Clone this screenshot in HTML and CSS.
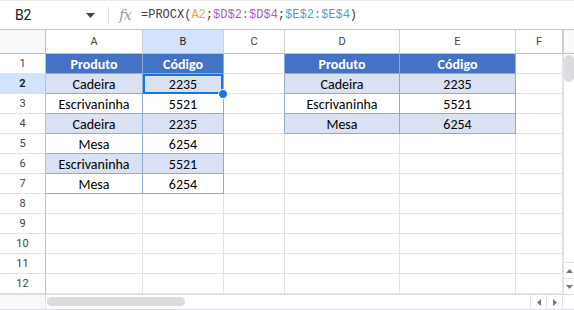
FILE: index.html
```html
<!DOCTYPE html>
<html>
<head>
<meta charset="utf-8">
<link rel="stylesheet" href="styles.css">
</head>
<body>
<div class="toolbar">
  <div class="namebox">B2</div>
  <svg class="dd" width="9" height="5" viewBox="0 0 9 5"><path d="M0 0h9L4.5 5z" fill="#444"/></svg>
  <div class="sep"></div>
  <div class="fx">fx</div>
  <div class="formula">=PROCX(<span class="r1">A2</span>;<span class="r2">$D$2:$D$4</span>;<span class="r3">$E$2:$E$4</span>)</div>
</div>
<div class="sheet">
  <div class="corner"></div>
  <div class="ch">A</div><div class="ch sel">B</div><div class="ch">C</div><div class="ch">D</div><div class="ch">E</div><div class="ch">F</div>
  <div class="chs"></div>

  <div class="vscroll">
    <div class="vtrack"><div class="vthumb"></div></div>
    <div class="vbtn"><svg width="7" height="4" viewBox="0 0 7 4"><path d="M0 4L3.5 0 7 4z" fill="#777"/></svg></div>
    <div class="vbtn"><svg width="7" height="4" viewBox="0 0 7 4"><path d="M0 0h7L3.5 4z" fill="#777"/></svg></div>
  </div>

  <div class="rh">1</div><div class="c th">Produto</div><div class="c th">Código</div><div class="c bl"></div><div class="c th">Produto</div><div class="c th">Código</div><div class="c"></div>
  <div class="rh sel">2</div><div class="c td1">Cadeira</div><div class="c td1 active">2235<span class="selbox"></span><span class="handle"></span></div><div class="c bl"></div><div class="c td1">Cadeira</div><div class="c td1">2235</div><div class="c"></div>
  <div class="rh">3</div><div class="c td0">Escrivaninha</div><div class="c td0">5521</div><div class="c bl"></div><div class="c td0">Escrivaninha</div><div class="c td0">5521</div><div class="c"></div>
  <div class="rh">4</div><div class="c td1">Cadeira</div><div class="c td1">2235</div><div class="c bl"></div><div class="c td1">Mesa</div><div class="c td1">6254</div><div class="c"></div>
  <div class="rh">5</div><div class="c td0">Mesa</div><div class="c td0">6254</div><div class="c"></div><div class="c"></div><div class="c"></div><div class="c"></div>
  <div class="rh">6</div><div class="c td1">Escrivaninha</div><div class="c td1">5521</div><div class="c"></div><div class="c"></div><div class="c"></div><div class="c"></div>
  <div class="rh">7</div><div class="c td0">Mesa</div><div class="c td0">6254</div><div class="c"></div><div class="c"></div><div class="c"></div><div class="c"></div>
  <div class="rh">8</div><div class="c"></div><div class="c"></div><div class="c"></div><div class="c"></div><div class="c"></div><div class="c"></div>
  <div class="rh">9</div><div class="c"></div><div class="c"></div><div class="c"></div><div class="c"></div><div class="c"></div><div class="c"></div>
  <div class="rh">10</div><div class="c"></div><div class="c"></div><div class="c"></div><div class="c"></div><div class="c"></div><div class="c"></div>
  <div class="rh">11</div><div class="c"></div><div class="c"></div><div class="c"></div><div class="c"></div><div class="c"></div><div class="c"></div>
  <div class="rh">12</div><div class="c"></div><div class="c"></div><div class="c"></div><div class="c"></div><div class="c"></div><div class="c"></div>

  <div class="hscroll">
    <div class="hcorner"></div>
    <div class="htrack"><div class="hthumb"></div></div>
    <div class="hbtn"><svg width="4" height="7" viewBox="0 0 4 7"><path d="M4 0v7L0 3.5z" fill="#777"/></svg></div>
    <div class="hbtn"><svg width="4" height="7" viewBox="0 0 4 7"><path d="M0 0v7L4 3.5z" fill="#777"/></svg></div>
    <div class="hend"></div>
  </div>
</div>
</body>
</html>
```
FILE: styles.css
```css
* { box-sizing: border-box; }
html, body { margin: 0; padding: 0; background: #fff; }
body { width: 574px; height: 310px; overflow: hidden; font-family: Roboto, "Liberation Sans", sans-serif; }

.toolbar {
  height: 30px;
  border-top: 1px solid #e8eaed;
  border-bottom: 1px solid #c7c7c7;
  display: flex;
  align-items: center;
  color: #202124;
}
.namebox { width: 86px; padding-left: 15px; font-size: 14px; letter-spacing: -0.3px; }
.dd { margin-top: 1px; }
.sep { width: 1px; height: 16px; background: #dadce0; margin-left: 13px; }
.fx {
  margin-left: 10px; width: 22px;
  font-family: "DejaVu Serif", "Liberation Serif", serif;
  font-style: italic; font-size: 15px; color: #9aa0a6; letter-spacing: -1px;
}
.formula { font-family: "Liberation Mono", "DejaVu Sans Mono", monospace; font-size: 12px; color: #3c4043; }
.r1 { color: #f2a33a; }
.r2 { color: #a05fc8; }
.r3 { color: #33a9cf; }

.sheet {
  display: grid;
  grid-template-columns: 46px 97px 81px 61px 115px 116px 47px 11px;
  grid-template-rows: 24px repeat(12, 20px) 16px;
}
.corner { background: #f8f9fa; border-right: 1px solid #c0c0c0; border-bottom: 1px solid #c0c0c0; }
.ch {
  border-right: 1px solid #d0d0d0; border-bottom: 1px solid #c0c0c0;
  display: flex; align-items: center; justify-content: center;
  font-size: 11px; color: #444;
}
.ch.sel { background: #d3e3fd; color: #1f1f1f; }
.chs { background: #f8f9fa; border-bottom: 1px solid #c0c0c0; border-left: 1px solid #d0d0d0; }

.vscroll {
  grid-column: 8; grid-row: 2 / 14;
  display: flex; flex-direction: column;
  border-left: 1px solid #e2e2e2;
}
.vtrack { flex: 1; padding: 1px 1px 0 0; }
.vthumb { height: 27px; width: 10px; background: #dadce0; border-radius: 5px; }
.vbtn {
  height: 16px; border-top: 1px solid #e2e2e2;
  display: flex; align-items: center; justify-content: center;
}

.rh {
  border-right: 1px solid #c0c0c0; border-bottom: 1px solid #e2e2e2;
  display: flex; align-items: center; justify-content: center;
  font-size: 11px; color: #444;
}
.rh.sel { background: #d3e3fd; color: #1f1f1f; font-weight: bold; }

.c {
  border-right: 1px solid #e2e2e2; border-bottom: 1px solid #e2e2e2;
  display: flex; align-items: center; justify-content: center;
  font-family: Calibri, Carlito, Lato, sans-serif; font-size: 14px; color: #000;
  padding-top: 1px;
}
.c.bl { border-right-color: #8eaadb; }
.th { background: #4472c4; color: #fff; font-weight: bold; border-right-color: #8eaadb; border-bottom-color: #8eaadb; }
.td1 { background: #d9e1f2; border-right-color: #8eaadb; border-bottom-color: #8eaadb; }
.td0 { background: #fff; border-right-color: #8eaadb; border-bottom-color: #8eaadb; }

.active { position: relative; }
.selbox {
  position: absolute; left: 0; top: 0; width: 80px; height: 20px;
  border: 2px solid #1a73e8;
}
.handle {
  position: absolute; left: 75px; top: 15px; width: 10px; height: 10px;
  border-radius: 50%; background: #1a73e8; border: 1px solid #fff; z-index: 2;
}

.hscroll {
  grid-column: 1 / -1;
  display: flex;
  border-top: 1px solid #dadce0;
  border-bottom: 1px solid #dadce0;
}
.hcorner { width: 46px; background: #f8f9fa; border-right: 1px solid #e2e2e2; }
.htrack { width: 484px; padding: 2px 0 0 1px; }
.hthumb { width: 138px; height: 9px; background: #dadce0; border-radius: 5px; }
.hbtn { width: 16px; border-left: 1px solid #e2e2e2; display: flex; align-items: center; justify-content: center; }
.hend { width: 12px; border-left: 1px solid #e2e2e2; }
```
